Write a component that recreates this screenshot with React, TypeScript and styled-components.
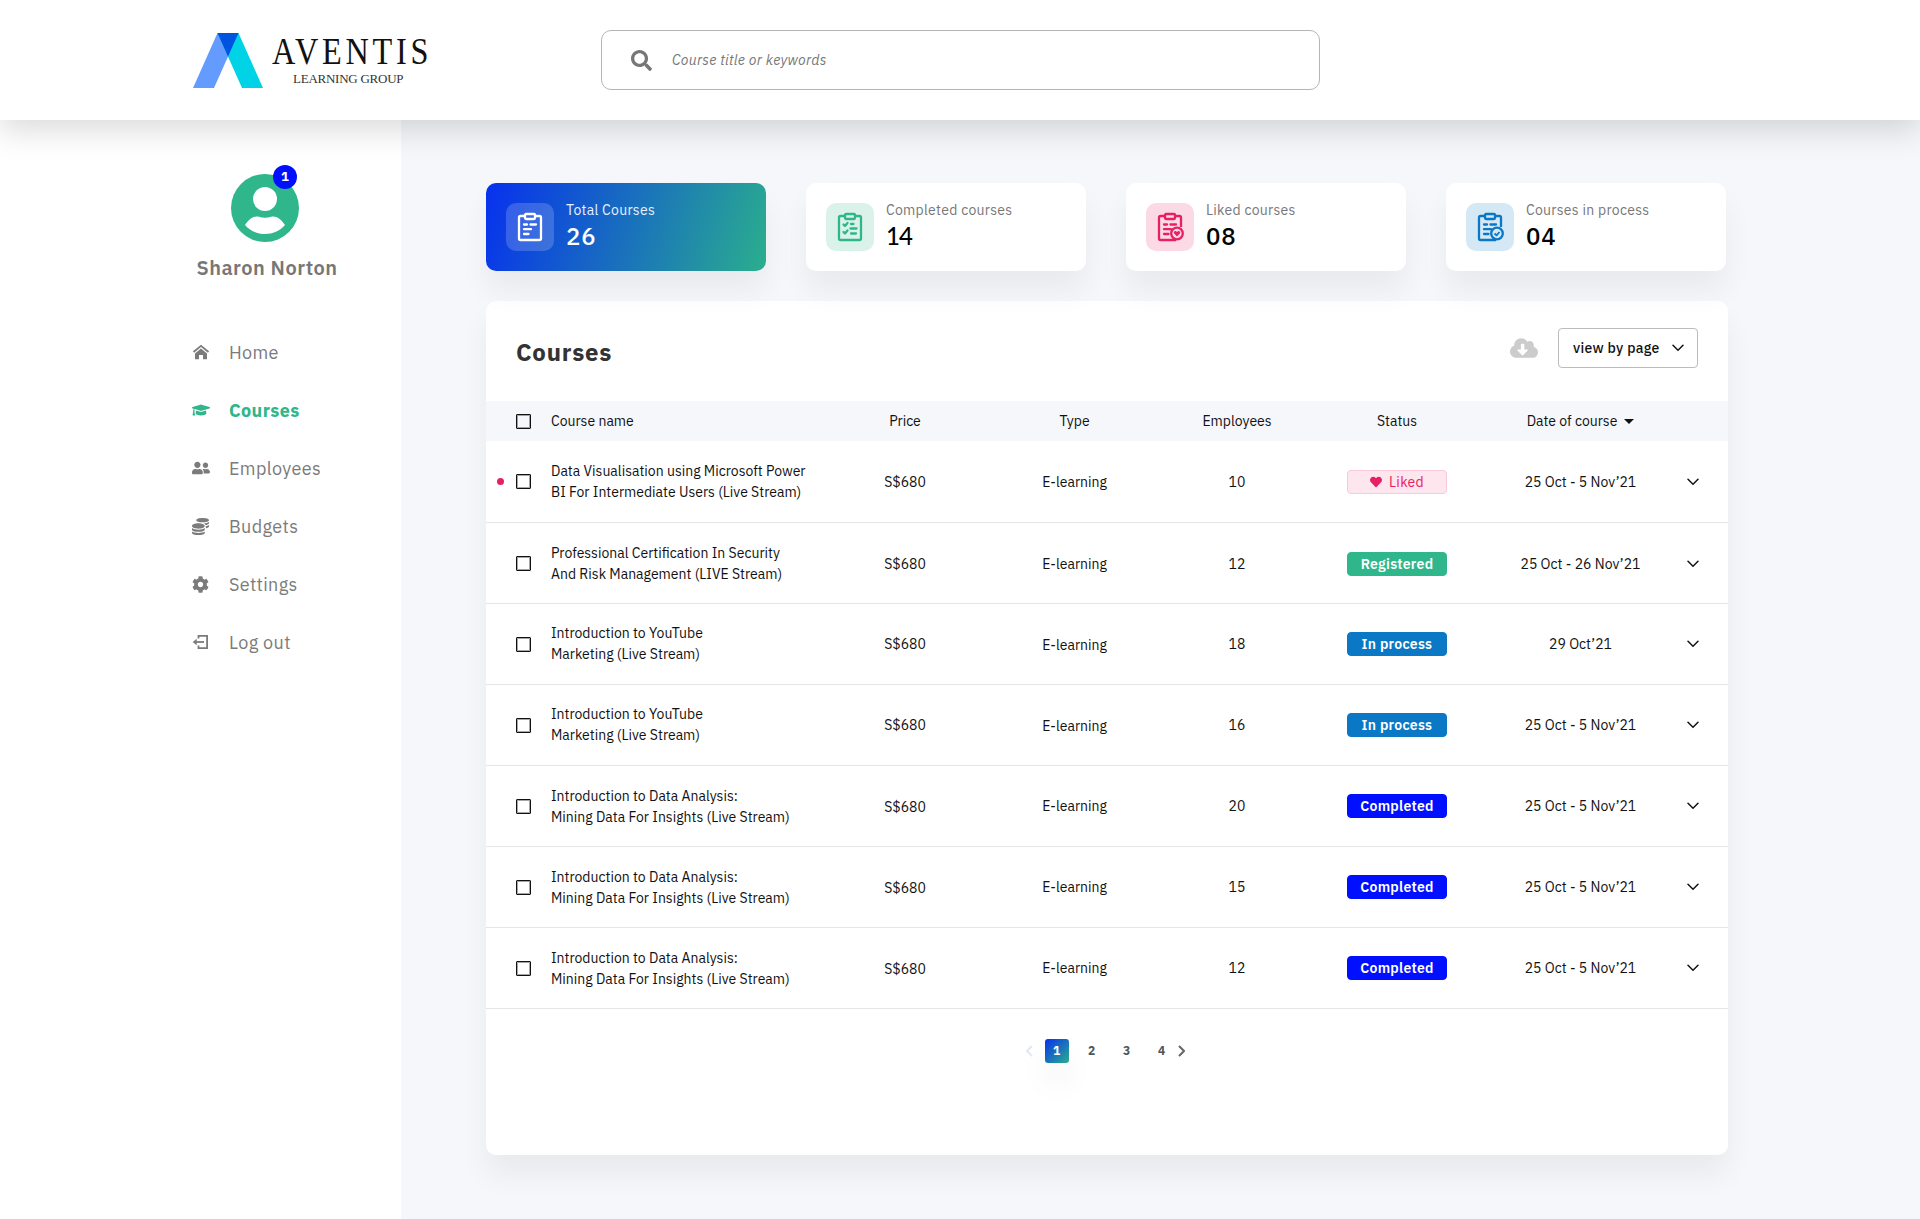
import React, { useState } from 'react';
import styled, { createGlobalStyle } from 'styled-components';
import { FaCloudDownloadAlt, FaCog, FaCoins, FaGraduationCap, FaHeart, FaSearch, FaUserFriends } from 'react-icons/fa';

const GlobalStyle = createGlobalStyle`
  * {
    box-sizing: border-box;
  }
  body {
    margin: 0;
    background: #f5f7fb;
    color: #111;
    font-family: 'IBM Plex Sans', Roboto, sans-serif;
    font-size: 14px;
  }
  svg {
    display: block;
    flex-shrink: 0;
  }
  button {
    font: inherit;
    border: 0;
    padding: 0;
    background: none;
    cursor: pointer;
  }
`;

const Page = styled.div`
  display: flex;
  flex-direction: column;
  width: 1920px;
  height: 1219px;
  overflow: hidden;
`;

const Header = styled.header`
  display: flex;
  align-items: center;
  height: 120px;
  flex-shrink: 0;
  padding-left: 193px;
  background: #fff;
  box-shadow: 0 10px 30px rgba(0, 0, 0, 0.15);
  z-index: 1;
`;

const Logo = styled.div`
  display: flex;
  width: 408px;
`;

const LogoText = styled.div`
  display: flex;
  flex-direction: column;
  margin-left: 9px;
  font-family: 'Liberation Serif', serif;
  color: #111;
`;

const LogoName = styled.span`
  font-size: 38px;
  line-height: 37px;
  letter-spacing: 4.4px;
  transform: scaleX(0.85);
  transform-origin: left;
  width: 180px;
`;

const LogoTag = styled.span`
  margin-left: 21px;
  font-size: 13px;
  line-height: 18px;
  letter-spacing: -0.25px;
  color: #333;
`;

const SearchBox = styled.label`
  display: flex;
  align-items: center;
  width: 719px;
  height: 60px;
  padding-left: 29px;
  border: 1px solid #b5b5b5;
  border-radius: 10px;
  color: #777;
`;

const SearchInput = styled.input`
  flex: 1;
  margin-left: 20px;
  padding: 0;
  border: 0;
  outline: 0;
  background: transparent;
  font: inherit;
  font-style: italic;
  letter-spacing: 0.3px;
  &::placeholder {
    color: #777;
    opacity: 1;
  }
`;

const Body = styled.div`
  display: flex;
  flex: 1;
`;

const Sidebar = styled.aside`
  width: 401px;
  padding-top: 54px;
  background: #fff;
`;

const Profile = styled.div`
  display: flex;
  flex-direction: column;
  align-items: center;
  width: 140px;
  margin-left: 197px;
`;

const Avatar = styled.div`
  position: relative;
  margin-right: 4px;
`;

const AvatarBadge = styled.span`
  position: absolute;
  top: -9px;
  right: 2px;
  width: 24px;
  height: 24px;
  border-radius: 50%;
  background: #0010ff;
  color: #fff;
  font-size: 13px;
  font-weight: 700;
  line-height: 24px;
  text-align: center;
`;

const ProfileName = styled.div`
  margin-top: 14px;
  font-size: 20px;
  font-weight: 600;
  line-height: 24px;
  letter-spacing: 0.5px;
  white-space: nowrap;
  color: #777;
`;

const Nav = styled.nav`
  display: flex;
  flex-direction: column;
  margin-top: 43px;
  padding-left: 192px;
`;

const NavItem = styled.button<{ $active: boolean }>`
  display: flex;
  align-items: center;
  height: 58px;
  color: ${props => (props.$active ? '#2fb68a' : '#7b7b7b')};
  font-size: 18px;
  font-weight: ${props => (props.$active ? 700 : 400)};
  letter-spacing: 0.36px;
`;

const NavIcon = styled.span`
  display: flex;
  width: 37px;
`;

const Main = styled.main`
  display: flex;
  flex-direction: column;
  flex: 1;
  padding: 63px 192px 64px 85px;
`;

const Cards = styled.div`
  display: flex;
  gap: 40px;
  margin-bottom: 30px;
  z-index: 1;
`;

const Card = styled.div<{ $featured?: boolean }>`
  display: flex;
  width: 280px;
  height: 88px;
  padding: 20px;
  border-radius: 10px;
  background: ${props => (props.$featured ? 'linear-gradient(107deg, #0731ee 0%, #2bae8d 100%)' : '#fff')};
  color: ${props => (props.$featured ? '#fff' : '#000')};
  box-shadow: 0 20px 30px rgba(0, 0, 0, 0.055);
`;

const CardIcon = styled.div<{ $bg: string; $fg: string }>`
  display: flex;
  align-items: center;
  justify-content: center;
  width: 48px;
  height: 48px;
  border-radius: 10px;
  background: ${props => props.$bg};
  color: ${props => props.$fg};
`;

const CardText = styled.div`
  display: flex;
  flex-direction: column;
  margin-left: 12px;
`;

const CardLabel = styled.span<{ $featured?: boolean }>`
  font-size: 14px;
  line-height: 14px;
  letter-spacing: 0.28px;
  color: ${props => (props.$featured ? '#eaf1ff' : '#777')};
`;

const CardValue = styled.span<{ $plain?: boolean }>`
  margin-top: 5px;
  font-family: ${props => (props.$plain ? 'Lato, sans-serif' : 'inherit')};
  font-size: 24px;
  font-weight: 500;
  line-height: 28px;
  letter-spacing: ${props => (props.$plain ? '-0.8px' : '0.8px')};
`;

const Panel = styled.section`
  width: 1242px;
  height: 854px;
  border-radius: 10px;
  background: #fff;
  box-shadow: 0 20px 30px rgba(0, 0, 0, 0.055);
`;

const PanelHead = styled.div`
  display: flex;
  align-items: center;
  height: 100px;
  padding: 0 30px;
`;

const PanelTitle = styled.h2`
  flex: 1;
  margin: 2px 0 0;
  font-size: 24px;
  font-weight: 700;
  letter-spacing: 0.75px;
  color: #333;
`;

const DownloadButton = styled.button`
  margin: -7px 20px 0 0;
  color: #ccc;
`;

const ViewSelect = styled.button`
  display: flex;
  align-items: center;
  justify-content: space-between;
  width: 140px;
  height: 40px;
  margin-top: -6px;
  padding: 0 13px 0 14px;
  border: 1px solid #bbb;
  border-radius: 4px;
  font-weight: 500;
  letter-spacing: 0.3px;
  color: #111;
`;

const Row = styled.div<{ $height: number }>`
  display: grid;
  grid-template-columns: 30px 35px 269px 170px 169px 156px 164px 203px 1fr;
  align-items: center;
  height: ${props => props.$height}px;
  border-bottom: 1px solid #e6e6e8;
`;

const HeadRow = styled(Row)`
  background: #f5f7fb;
  border-bottom: 0;
`;

const Cell = styled.div<{ $low?: boolean }>`
  display: flex;
  align-items: center;
  justify-content: center;
  padding-top: ${props => (props.$low ? 2 : 0)}px;
  white-space: nowrap;
`;

const NameCell = styled(Cell)`
  justify-content: flex-start;
  line-height: 21px;
  white-space: pre;
`;

const Dot = styled.span`
  width: 7px;
  height: 7px;
  margin-left: 11px;
  border-radius: 50%;
  background: #e72063;
`;

const Checkbox = styled.button`
  width: 15px;
  height: 15px;
  border: 1px solid #111;
  border-radius: 1px;
  box-shadow: inset 0 0 0 1px rgba(0, 0, 0, 0.35);
`;

const SortArrow = styled.span`
  width: 0;
  height: 0;
  margin-left: 7px;
  border: 5px solid transparent;
  border-top-color: #111;
  border-bottom: 0;
`;

type Status = 'Liked' | 'Registered' | 'In process' | 'Completed';

const statusColors: Record<Status, string> = {
  Liked: '#fde6ee',
  Registered: '#2fb68a',
  'In process': '#0a78c4',
  Completed: '#0010ff',
};

const StatusTag = styled.span<{ $status: Status }>`
  display: flex;
  align-items: center;
  justify-content: center;
  gap: 7px;
  width: 100px;
  height: 24px;
  border-radius: 4px;
  border: 1px solid ${props => (props.$status === 'Liked' ? '#fbc9d9' : statusColors[props.$status])};
  background: ${props => statusColors[props.$status]};
  color: ${props => (props.$status === 'Liked' ? '#e72063' : '#fff')};
  font-weight: ${props => (props.$status === 'Liked' ? 400 : 600)};
  letter-spacing: 0.28px;
`;

const ExpandButton = styled.button<{ $low?: boolean }>`
  margin-left: 5px;
  padding-top: ${props => (props.$low ? 2 : 0)}px;
  color: #111;
`;

const Pagination = styled.div`
  display: flex;
  align-items: center;
  height: 24px;
  margin: 30px 0 0 540px;
`;

const PageArrow = styled.button<{ $disabled?: boolean }>`
  color: ${props => (props.$disabled ? '#e3e8f2' : '#666')};
`;

const PageList = styled.div`
  display: flex;
  gap: 11px;
  margin: 0 4px 0 12px;
`;

const PageButton = styled.button<{ $active: boolean }>`
  width: 24px;
  height: 24px;
  padding: 0 1px 2px 0;
  border-radius: 3px;
  font-size: 12px;
  font-weight: 700;
  text-align: center;
  color: ${props => (props.$active ? '#fff' : '#50555c')};
  background: ${props => (props.$active ? 'linear-gradient(135deg, #0731ee, #2bae8d)' : 'none')};
  box-shadow: ${props => (props.$active ? '0 20px 30px rgba(0, 0, 0, 0.055)' : 'none')};
`;

const LogoMark = () => (
  <svg width="70" height="55" viewBox="0 0 70 55">
    <path d="M24.5 0H45.5L21 55H0Z" fill="#639bff" />
    <path d="M24.5 0H45.5L70 55H49Z" fill="#00d3e5" />
    <path d="M24.5 0H45.5L35 23.5Z" fill="#0052e0" />
  </svg>
);

const AvatarIcon = () => (
  <svg width="68" height="68" viewBox="0 0 68 68">
    <circle cx="34" cy="34" r="34" fill="#2fb68a" />
    <circle cx="34" cy="25" r="12" fill="#fff" />
    <path d="M14 51C18 45 23 41.5 28 42.8C32 44.2 36 44.2 40 42.8C45 41.5 50 45 54 51C44 63 24 63 14 51Z" fill="#fff" />
  </svg>
);

const HomeIcon = () => (
  <svg width="18" height="16" viewBox="0 0 18 16">
    <path d="M1.5 8L9 1.8L16.5 8" fill="none" stroke="currentColor" strokeWidth="1.8" />
    <path d="M9 4.6L15 9.5V15.2H11V11H7V15.2H3V9.5Z" fill="currentColor" />
  </svg>
);

const LogoutIcon = () => (
  <svg width="17" height="16" viewBox="0 0 17 16" fill="none" stroke="currentColor" strokeWidth="1.8">
    <path d="M6.5 4.5V1.9H15.1V14.1H6.5V11.5" />
    <path d="M3 8H12" />
    <path d="M0.7 8L4.7 4.8V11.2Z" fill="currentColor" stroke="none" />
  </svg>
);

const ChevronDown = () => (
  <svg width="12" height="8" viewBox="0 0 12 8" fill="none" stroke="currentColor" strokeWidth="1.5">
    <path d="M1 1.2L6 6.2L11 1.2" strokeLinecap="round" />
  </svg>
);

const PageChevron = ({ next }: { next?: boolean }) => (
  <svg width="7" height="12" viewBox="0 0 7 12" fill="none" stroke="currentColor" strokeWidth="2">
    <path d={next ? 'M1 1L6 6L1 11' : 'M6 1L1 6L6 11'} />
  </svg>
);

type ClipboardKind = 'total' | 'completed' | 'liked' | 'process';

const Clipboard = ({ kind }: { kind: ClipboardKind }) => (
  <svg width="28" height="30" viewBox="0 0 28 30" fill="none" stroke="currentColor" strokeWidth="2.3" strokeLinejoin="round">
    {kind === 'liked' || kind === 'process' ? (
      <path d="M9 4H4.5Q3 4 3 5.5V26.5Q3 28 4.5 28H20M19 4H23.5Q25 4 25 5.5V15" />
    ) : (
      <path d="M9 4H4.5Q3 4 3 5.5V26.5Q3 28 4.5 28H23.5Q25 28 25 26.5V5.5Q25 4 23.5 4H19" />
    )}
    <rect x="9" y="2" width="10" height="5" rx="1" />
    {kind === 'completed' ? (
      <g strokeLinecap="round">
        <path d="M7.5 12.5L9 14L11.5 11M7.5 20L9 21.5L11.5 18.5" />
        <path d="M15 12H17.5M14.5 16.5H20.5M15 21.5H20" />
      </g>
    ) : (
      <path d="M8 12.5H11M14.5 12.5H20M8 17.2H15M8 22H12.5" strokeLinecap="round" />
    )}
    {(kind === 'liked' || kind === 'process') && <circle cx="21" cy="21.5" r="5.8" />}
    {kind === 'liked' && (
      <path d="M21 24.5L18 21.3C17 19.4 19.8 18 21 20.2C22.2 18 25 19.4 24 21.3Z" fill="currentColor" stroke="none" />
    )}
    {kind === 'process' && <path d="M18.5 21.5L20.5 23.3L23.5 20" strokeWidth="1.8" />}
  </svg>
);

const navItems = [
  { name: 'Home', icon: <HomeIcon /> },
  { name: 'Courses', icon: <FaGraduationCap size={18} /> },
  { name: 'Employees', icon: <FaUserFriends size={18} /> },
  { name: 'Budgets', icon: <FaCoins size={17} /> },
  { name: 'Settings', icon: <FaCog size={17} /> },
  { name: 'Log out', icon: <LogoutIcon /> },
];

type CardData = { label: string; value: string; kind: ClipboardKind; bg: string; fg: string };

const cards: Array<CardData> = [
  { label: 'Total Courses', value: '26', kind: 'total', bg: 'rgba(255, 255, 255, 0.18)', fg: '#fff' },
  { label: 'Completed courses', value: '14', kind: 'completed', bg: '#dbf2ea', fg: '#2fb68a' },
  { label: 'Liked courses', value: '08', kind: 'liked', bg: '#fcdae5', fg: '#e72063' },
  { label: 'Courses in process', value: '04', kind: 'process', bg: '#d5e8f5', fg: '#0a78c4' },
];

type Column = 'name' | 'price' | 'type' | 'rest';

// low: columns that sit a pixel under the row's centre line
type Course = { name: string; employees: number; status: Status; date: string; low: Array<Column>; isNew?: boolean };

const youtube = 'Introduction to YouTube\nMarketing (Live Stream)';
const analysis = 'Introduction to Data Analysis:\nMining Data For Insights (Live Stream)';

const courses: Array<Course> = [
  {
    name: 'Data Visualisation using Microsoft Power\nBI For Intermediate Users (Live Stream)',
    employees: 10,
    status: 'Liked',
    date: '25 Oct - 5 Nov’21',
    low: [],
    isNew: true,
  },
  {
    name: 'Professional Certification In Security\nAnd Risk Management (LIVE Stream)',
    employees: 12,
    status: 'Registered',
    date: '25 Oct - 26 Nov’21',
    low: ['name', 'price', 'type', 'rest'],
  },
  { name: youtube, employees: 18, status: 'In process', date: '29 Oct’21', low: ['type'] },
  { name: youtube, employees: 16, status: 'In process', date: '25 Oct - 5 Nov’21', low: ['type'] },
  { name: analysis, employees: 20, status: 'Completed', date: '25 Oct - 5 Nov’21', low: ['name', 'price'] },
  { name: analysis, employees: 15, status: 'Completed', date: '25 Oct - 5 Nov’21', low: ['name', 'price'] },
  { name: analysis, employees: 12, status: 'Completed', date: '25 Oct - 5 Nov’21', low: ['name', 'price'] },
];

const CourseTable = () => (
  <>
    <HeadRow $height={40}>
      <span />
      <Checkbox />
      <NameCell>Course name</NameCell>
      <Cell>Price</Cell>
      <Cell>Type</Cell>
      <Cell>Employees</Cell>
      <Cell>Status</Cell>
      <Cell>
        Date of course
        <SortArrow />
      </Cell>
    </HeadRow>
    {courses.map((course, idx) => {
      const restLow = course.low.includes('rest');
      return (
        <Row key={idx} $height={idx === 0 ? 82 : 81}>
          {course.isNew ? <Dot /> : <span />}
          <Checkbox />
          <NameCell $low={course.low.includes('name')}>{course.name}</NameCell>
          <Cell $low={course.low.includes('price')}>S$680</Cell>
          <Cell $low={course.low.includes('type')}>E-learning</Cell>
          <Cell $low={restLow}>{course.employees}</Cell>
          <Cell $low={restLow}>
            <StatusTag $status={course.status}>
              {course.status === 'Liked' && <FaHeart size={12} />}
              {course.status}
            </StatusTag>
          </Cell>
          <Cell $low={restLow}>{course.date}</Cell>
          <ExpandButton $low={restLow}>
            <ChevronDown />
          </ExpandButton>
        </Row>
      );
    })}
  </>
);

const App: React.FC = () => {
  const [currentTab, setTab] = useState(1);
  const [currentPage, setPage] = useState(1);
  return (
    <Page>
      <GlobalStyle />
      <Header>
        <Logo>
          <LogoMark />
          <LogoText>
            <LogoName>AVENTIS</LogoName>
            <LogoTag>LEARNING GROUP</LogoTag>
          </LogoText>
        </Logo>
        <SearchBox>
          <FaSearch size={21} />
          <SearchInput placeholder="Course title or keywords" />
        </SearchBox>
      </Header>
      <Body>
        <Sidebar>
          <Profile>
            <Avatar>
              <AvatarIcon />
              <AvatarBadge>1</AvatarBadge>
            </Avatar>
            <ProfileName>Sharon Norton</ProfileName>
          </Profile>
          <Nav>
            {navItems.map((item, idx) => (
              <NavItem key={item.name} $active={idx === currentTab} onClick={() => setTab(idx)}>
                <NavIcon>{item.icon}</NavIcon>
                {item.name}
              </NavItem>
            ))}
          </Nav>
        </Sidebar>
        <Main>
          <Cards>
            {cards.map(card => (
              <Card key={card.kind} $featured={card.kind === 'total'}>
                <CardIcon $bg={card.bg} $fg={card.fg}>
                  <Clipboard kind={card.kind} />
                </CardIcon>
                <CardText>
                  <CardLabel $featured={card.kind === 'total'}>{card.label}</CardLabel>
                  <CardValue $plain={card.kind === 'completed'}>{card.value}</CardValue>
                </CardText>
              </Card>
            ))}
          </Cards>
          <Panel>
            <PanelHead>
              <PanelTitle>Courses</PanelTitle>
              <DownloadButton>
                <FaCloudDownloadAlt size={28} />
              </DownloadButton>
              <ViewSelect>
                view by page
                <ChevronDown />
              </ViewSelect>
            </PanelHead>
            <CourseTable />
            <Pagination>
              <PageArrow $disabled>
                <PageChevron />
              </PageArrow>
              <PageList>
                {[1, 2, 3, 4].map(page => (
                  <PageButton key={page} $active={page === currentPage} onClick={() => setPage(page)}>
                    {page}
                  </PageButton>
                ))}
              </PageList>
              <PageArrow>
                <PageChevron next />
              </PageArrow>
            </Pagination>
          </Panel>
        </Main>
      </Body>
    </Page>
  );
};

export default App;
